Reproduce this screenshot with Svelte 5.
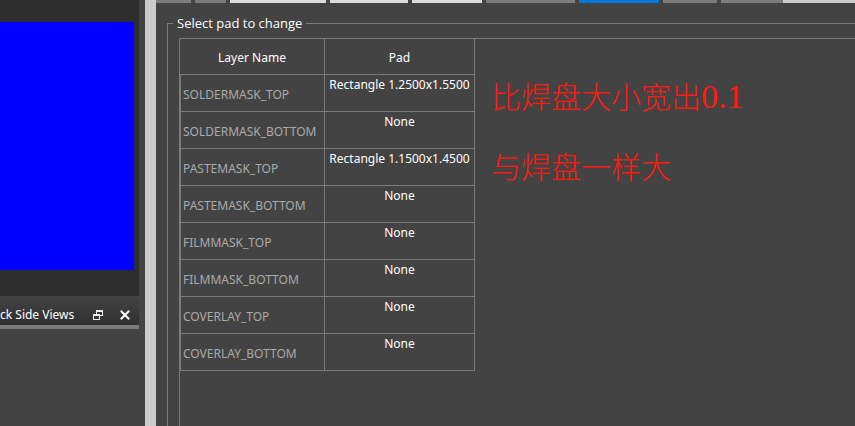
<script lang="ts">
	const tabs = [
		{ width: 35, kind: 'normal' },
		{ width: 31, kind: 'normal' },
		{ width: 96, kind: 'light' },
		{ width: 78, kind: 'light' },
		{ width: 70, kind: 'light' },
		{ width: 89, kind: 'normal' },
		{ width: 80, kind: 'current' },
		{ width: 54, kind: 'normal' },
		{ width: 62, kind: 'normal' }
	];

	const layers = [
		{ name: 'SOLDERMASK_TOP', pad: 'Rectangle 1.2500x1.5500' },
		{ name: 'SOLDERMASK_BOTTOM', pad: 'None' },
		{ name: 'PASTEMASK_TOP', pad: 'Rectangle 1.1500x1.4500' },
		{ name: 'PASTEMASK_BOTTOM', pad: 'None' },
		{ name: 'FILMMASK_TOP', pad: 'None' },
		{ name: 'FILMMASK_BOTTOM', pad: 'None' },
		{ name: 'COVERLAY_TOP', pad: 'None' },
		{ name: 'COVERLAY_BOTTOM', pad: 'None' }
	];
</script>

<div class="window">
	<aside>
		<div class="view">
			<div class="pad"></div>
		</div>
		<header>
			<span>ck Side Views</span>
			<button type="button" aria-label="Float">
				<svg width="10" height="10" viewBox="0 0 10 10" shape-rendering="crispEdges">
					<path d="M3 0h7v2H3zM3 2h1v2H3zM9 2h1v4H9zM7 5h2v1H7z" />
					<path d="M0 4h7v2H0zM0 6h1v4H0zM6 6h1v4H6zM1 9h5v1H1z" />
				</svg>
			</button>
			<button type="button" aria-label="Close">
				<svg width="10" height="10" viewBox="0 0 10 10">
					<path class="cross" d="M.8.8l8.4 8.4M9.2.8L.8 9.2" />
				</svg>
			</button>
		</header>
	</aside>

	<div class="splitter"></div>

	<main>
		<nav>
			{#each tabs as tab, i}
				<button
					type="button"
					class="tab {tab.kind}"
					style="width: {tab.width}px"
					aria-label="Tab {i + 1}"
				></button>
			{/each}
			<div class="rest"></div>
		</nav>

		<fieldset>
			<legend>Select pad to change</legend>
			<div class="frame">
				<table>
					<thead>
						<tr>
							<th>Layer Name</th>
							<th>Pad</th>
						</tr>
					</thead>
					<tbody>
						{#each layers as layer}
							<tr>
								<td class="name">{layer.name}</td>
								<td class="value">{layer.pad}</td>
							</tr>
						{/each}
					</tbody>
				</table>
				<div class="notes">
					<p>比焊盘大小宽出<span>0.1</span></p>
					<p>与焊盘一样大</p>
				</div>
			</div>
		</fieldset>
	</main>
</div>

<style>
	:global(body) {
		margin: 0;
		background: #434343;
	}
	.window {
		display: grid;
		grid-template-columns: 145px 11px minmax(0, 1fr);
		min-height: 100vh;
		overflow: hidden;
		color: #fff;
		font-family: 'Noto Sans', sans-serif;
		font-size: 12px;
		line-height: 18px;
	}
	button {
		border: none;
		padding: 0;
		background: transparent;
	}

	aside {
		padding-right: 6px;
	}
	.view {
		padding: 22px 5px 26px 0;
		background: #2d2d2d;
	}
	.pad {
		height: 248px;
		background: #00f;
	}
	header {
		display: flex;
		align-items: center;
		height: 29px;
		padding-top: 8px;
		box-sizing: border-box;
		background: linear-gradient(#434343, #303030);
		box-shadow: 0 4px #7c7c7c;
		white-space: nowrap;
	}
	header span {
		flex: 1;
	}
	header button {
		display: flex;
		margin-right: 9px;
	}
	header button + button {
		margin-left: 8px;
	}
	header svg {
		fill: #eee;
	}
	.cross {
		fill: none;
		stroke: #fff;
		stroke-width: 2;
	}

	.splitter {
		background: #cbcbcb;
	}

	nav {
		display: flex;
		height: 3px;
	}
	.tab {
		flex: none;
		margin-right: 4px;
		background: #7c7c7c;
	}
	.tab.light {
		background: #dcdcdc;
	}
	.tab.current {
		background: #0078d7;
	}
	.tab:nth-last-child(2) {
		margin-right: 0;
	}
	.rest {
		flex: 1;
		background: #cbcbcb;
	}

	main {
		display: flex;
		flex-direction: column;
	}
	fieldset {
		flex: 1;
		min-width: 0;
		margin: 11px 0 0 11px;
		border: solid #7c7c7c;
		border-width: 1px 0 0 1px;
		padding: 6px 0 0 11px;
		display: flex;
	}
	legend {
		margin-left: -6px;
		padding: 0 4px;
		font-family: 'Open Sans', sans-serif;
		font-size: 13px;
	}
	.frame {
		flex: 1;
		display: flex;
		align-items: flex-start;
		border: solid #7c7c7c;
		border-width: 1px 0 0 1px;
	}
	table {
		flex: none;
		table-layout: fixed;
		width: 295px;
		border-spacing: 0;
		line-height: 20px;
	}
	th,
	td {
		box-sizing: border-box;
		border: solid #7c7c7c;
		border-width: 0 1px 1px 0;
		padding: 0 2px;
		white-space: nowrap;
	}
	th {
		height: 36px;
		padding-top: 2px;
		font-weight: 400;
	}
	th:first-child {
		width: 145px;
	}
	td {
		height: 37px;
	}
	.name {
		border-left-width: 1px;
		padding-top: 4px;
		color: #aaa;
	}
	.value {
		vertical-align: top;
		text-align: center;
	}

	.notes {
		padding: 36px 0 0 16px;
		color: #fe1a10;
		font-family: 'Noto Sans CJK SC', sans-serif;
		font-size: 30px;
		font-weight: 300;
		line-height: 40px;
		white-space: nowrap;
	}
	.notes p {
		margin: 0 0 28px;
	}
	.notes span {
		font-family: 'Liberation Serif', serif;
		font-size: 34px;
	}
</style>
